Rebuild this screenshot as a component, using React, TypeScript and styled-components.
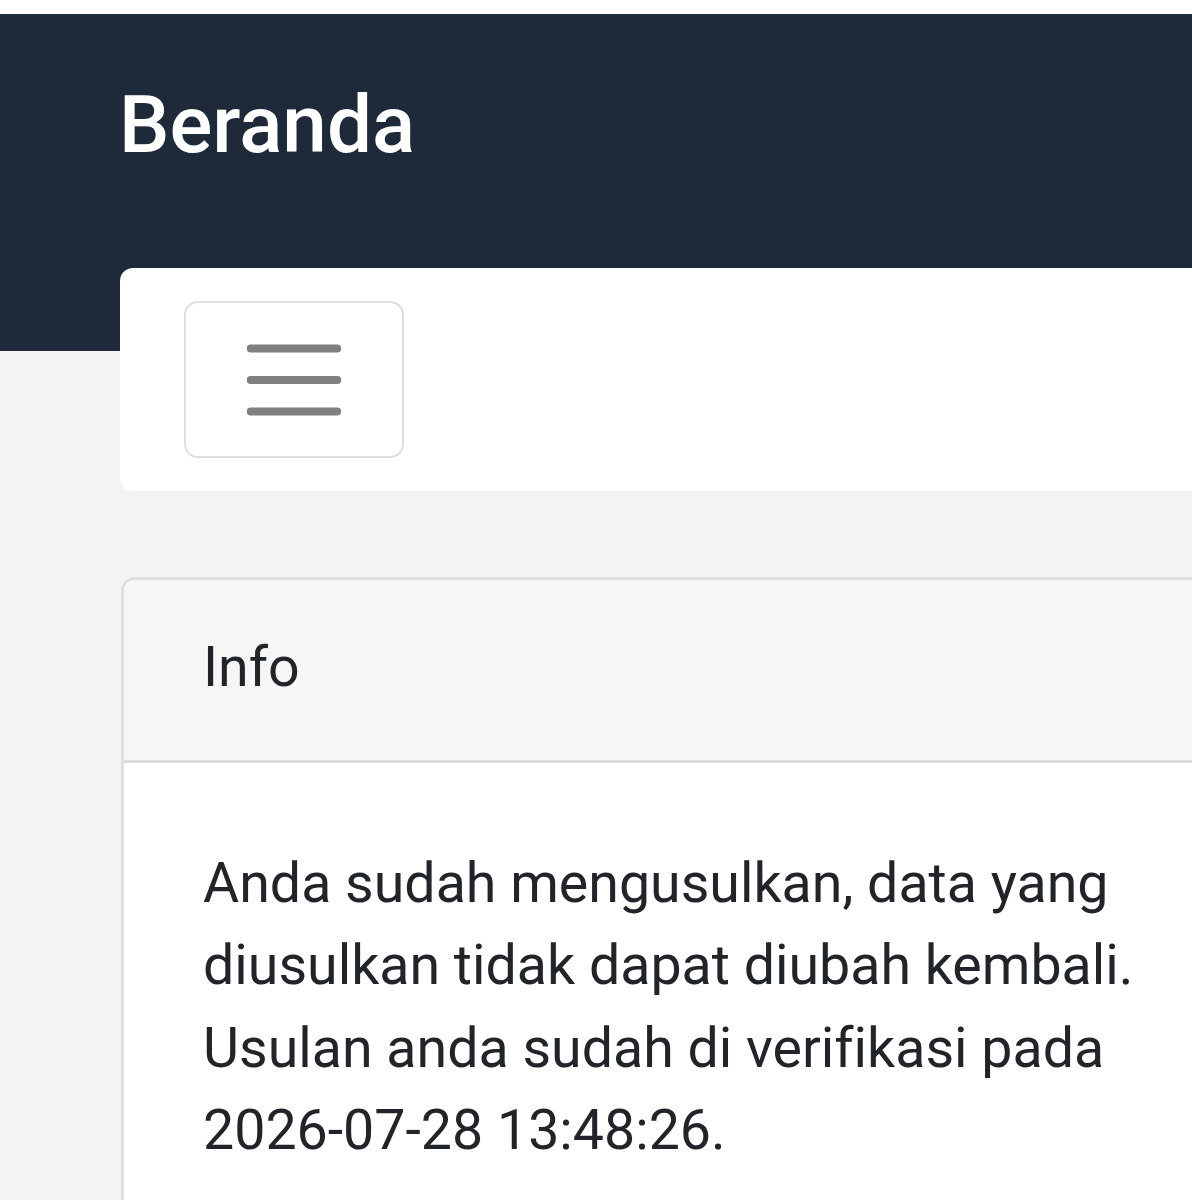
import React from "react";
import styled, { createGlobalStyle } from "styled-components";

const Global = createGlobalStyle`
  html, body {
    margin: 0;
    padding: 0;
    background: #f3f3f3;
    overflow-x: hidden;
  }
  * { box-sizing: border-box; }
  body {
    font-family: Roboto, "Liberation Sans", Arial, sans-serif;
    color: #212529;
    font-variant-ligatures: none;
  }
`;

const Page = styled.div`
  min-height: 1200px;
  background: #f3f3f3;
  border-top: 14px solid #ffffff;
`;

const Header = styled.header`
  height: 337px;
  background: #1e2939;
  padding: 63px 0 0 119px;
`;

const Title = styled.h1`
  margin: 0;
  font-family: Roboto, "Liberation Sans", Arial, sans-serif;
  font-weight: 500;
  font-size: 80px;
  line-height: 1.2;
  color: #ffffff;
`;

const Main = styled.main`
  margin-top: -83px;
  padding-left: 120px;
  display: flex;
  flex-direction: column;
  gap: 86px;
`;

const NavCard = styled.nav`
  width: calc(100% + 60px);
  height: 223px;
  background: #ffffff;
  border-radius: 13px;
  padding: 33px 64px;
  display: flex;
  align-items: center;
`;

const Toggler = styled.button`
  width: 220px;
  height: 157px;
  background: #ffffff;
  border: 2px solid #dedede;
  border-radius: 14px;
  padding: 0;
  display: flex;
  align-items: center;
  justify-content: center;
  cursor: pointer;
`;

const InfoCard = styled.section`
  width: calc(100% + 60px);
  margin-left: 1px;
  background: #ffffff;
  border: 3px solid #dfdfdf;
  border-radius: 14px;
  overflow: hidden;
`;

const CardHeader = styled.div`
  background: #f6f6f6;
  border-bottom: 3px solid #dcdcdc;
  padding: 47px 0 51px 79px;
  font-size: 55.5px;
  line-height: 82px;
  color: #212529;
`;

const CardBody = styled.div`
  padding: 80px 0 60px 79px;
`;

const Text = styled.p`
  margin: 0;
  max-width: 960px;
  font-size: 55.5px;
  line-height: 82.3px;
  color: #212529;
`;

const MenuIcon = () => (
  <svg width="118" height="118" viewBox="0 0 30 30" aria-hidden="true">
    <path
      d="M4 7h22M4 15h22M4 23h22"
      stroke="#808080"
      strokeWidth="2"
      strokeLinecap="round"
      fill="none"
    />
  </svg>
);

export default function App() {
  return (
    <>
      <Global />
      <Page>
        <Header>
          <Title>Beranda</Title>
        </Header>
        <Main>
          <NavCard>
            <Toggler aria-label="Menu">
              <MenuIcon />
            </Toggler>
          </NavCard>
          <InfoCard>
            <CardHeader>Info</CardHeader>
            <CardBody>
              <Text>
                Anda sudah mengusulkan, data yang diusulkan tidak dapat diubah
                kembali. Usulan anda sudah di verifikasi pada 2026-07-28
                13:48:26.
              </Text>
            </CardBody>
          </InfoCard>
        </Main>
      </Page>
    </>
  );
}
